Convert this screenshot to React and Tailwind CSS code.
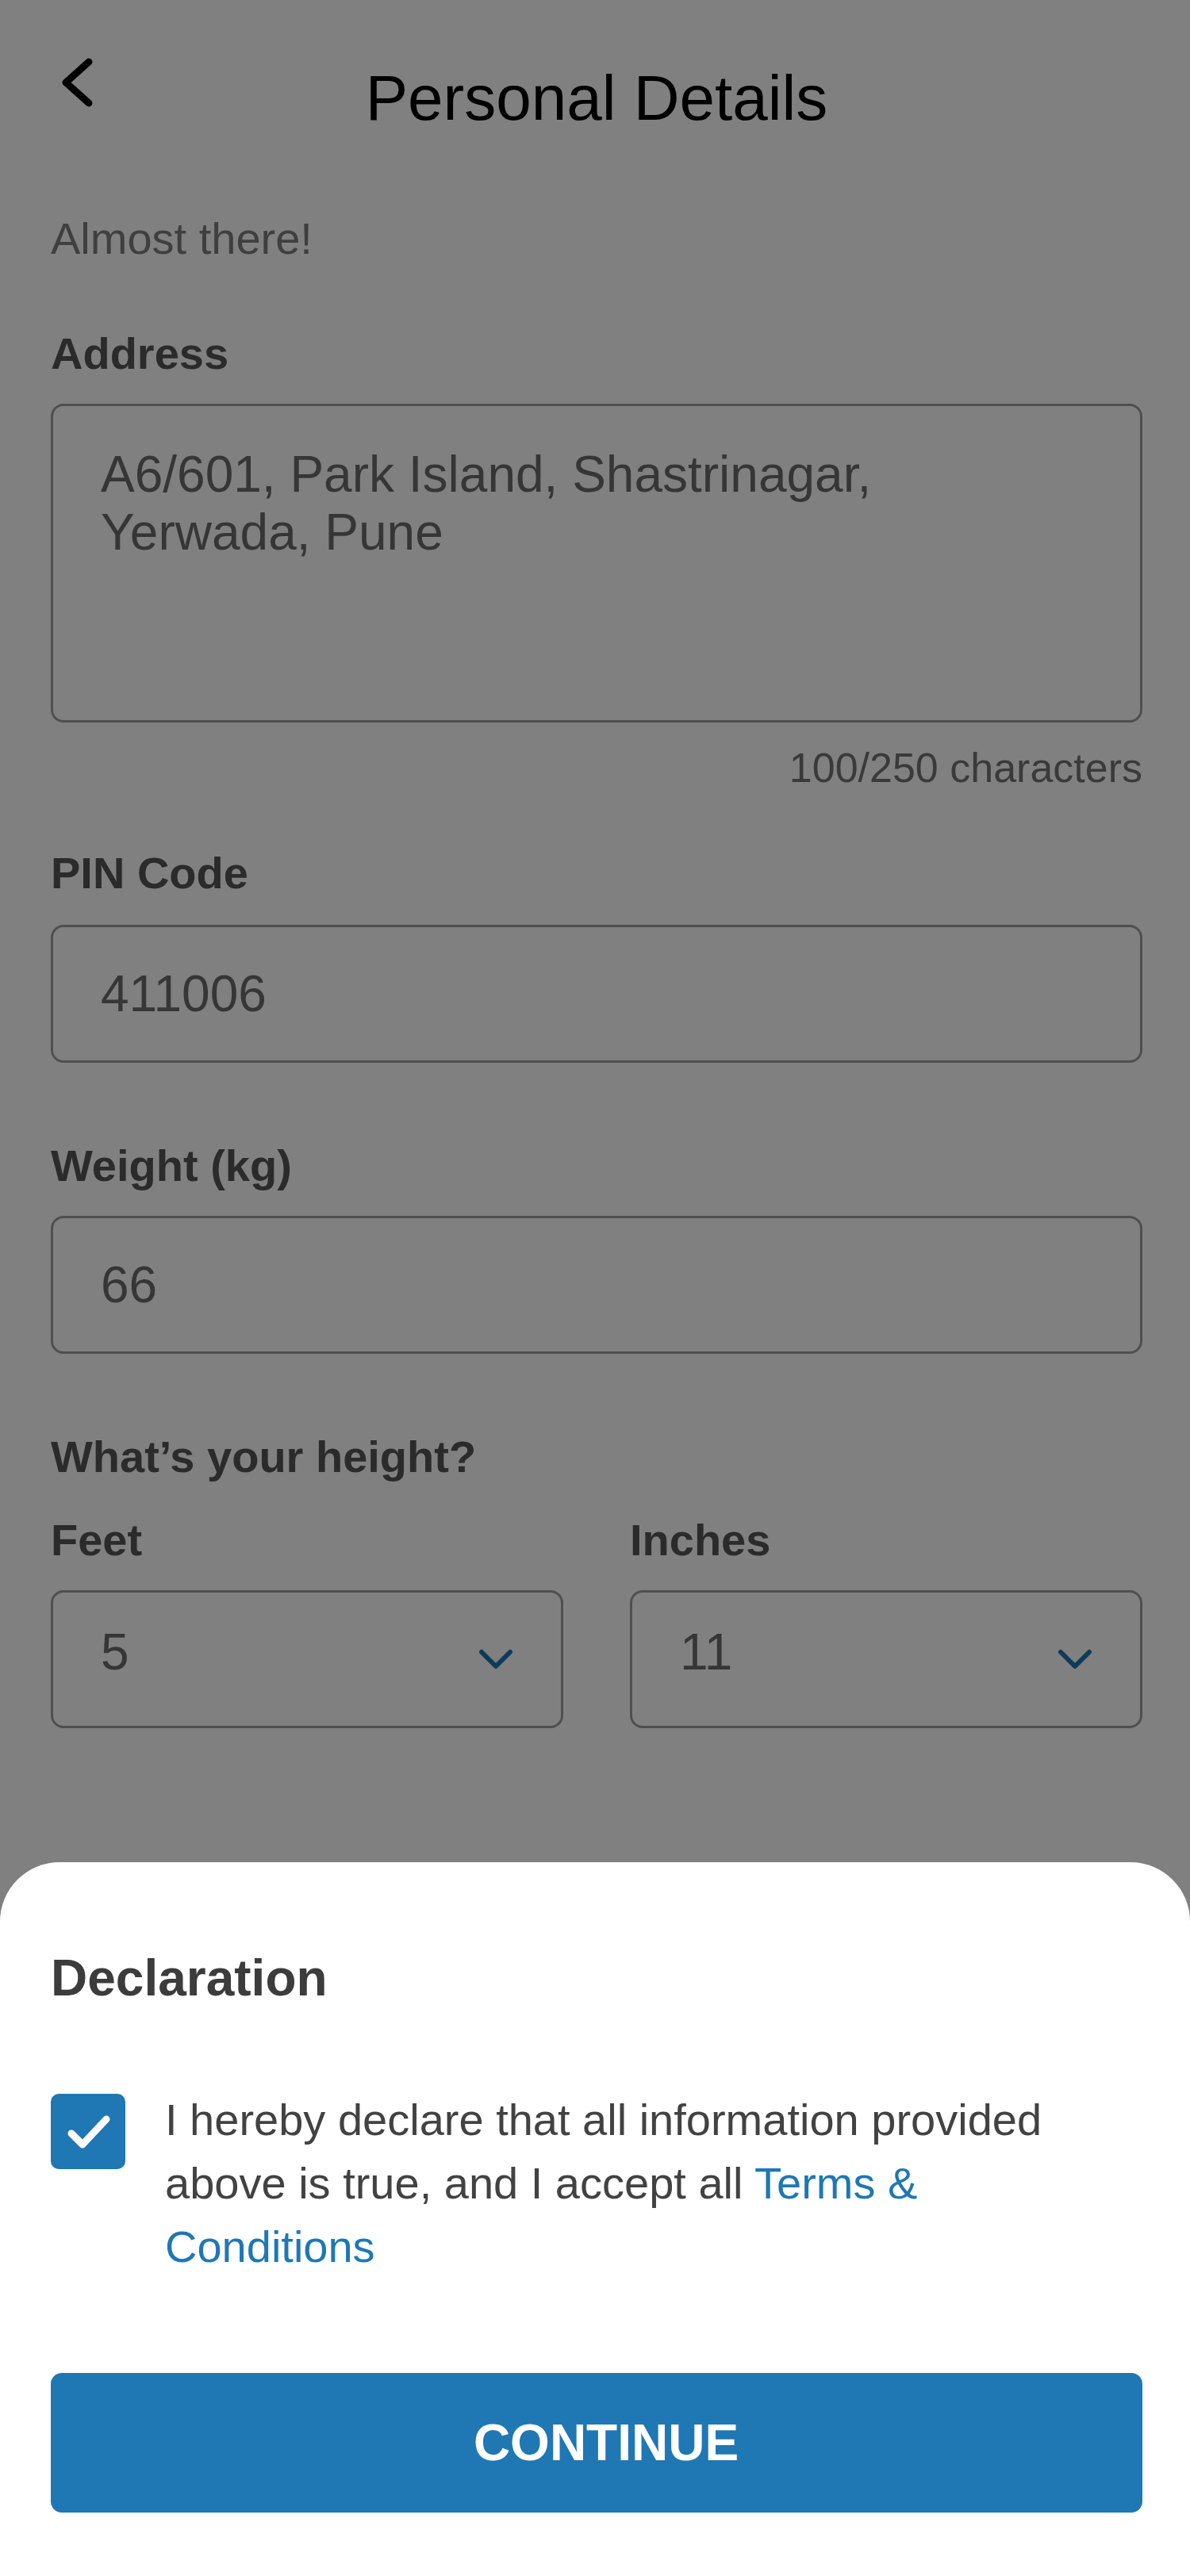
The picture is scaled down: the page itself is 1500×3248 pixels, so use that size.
import React from "react";

const font = { fontFamily: '"Liberation Sans", Arial, sans-serif' };

function Chevron() {
  return (
    <svg width="44" height="28" viewBox="0 0 44 28" className="shrink-0">
      <polyline
        points="4,5 22,23 40,5"
        fill="none"
        stroke="#0e3b5a"
        strokeWidth="6"
        strokeLinecap="round"
        strokeLinejoin="round"
      />
    </svg>
  );
}

function Label({ children, className = "" }) {
  return (
    <div className={`text-[56px] leading-[64px] font-bold text-[#2b2b2b] ${className}`}>
      {children}
    </div>
  );
}

function InputBox({ value, className = "" }) {
  return (
    <div
      className={`h-[174px] border-[3px] border-[#4f4f4f] rounded-[16px] flex items-center px-[60px] ${className}`}
    >
      <span className="text-[64px] leading-[73px] text-[#363636]">{value}</span>
    </div>
  );
}

function SelectBox({ value }) {
  return (
    <div className="h-[174px] border-[3px] border-[#4f4f4f] rounded-[16px] flex items-center justify-between pl-[60px] pr-[60px]">
      <span className="text-[64px] leading-[73px] text-[#363636] mb-[18px]">{value}</span>
      <Chevron />
    </div>
  );
}

export default function App() {
  return (
    <div style={font} className="w-[1500px] h-[3248px] bg-[#808080] flex flex-col">
      <div className="flex-1 pl-[64px] pr-[60px]">
        <div className="grid grid-cols-[1fr_auto_1fr] pt-[76px]">
          <div className="flex items-start">
            <svg width="64" height="80" viewBox="0 0 64 80" className="-mt-[6px]">
              <polyline
                points="48,8 19,34 48,60"
                fill="none"
                stroke="#000"
                strokeWidth="9"
                strokeLinecap="round"
                strokeLinejoin="round"
              />
            </svg>
          </div>
          <div className="text-[80px] leading-[96px] text-black text-center">Personal Details</div>
          <div />
        </div>

        <div className="mt-[97px] text-[56px] leading-[64px] text-[#3f3f3f]">Almost there!</div>

        <Label className="mt-[81px]">Address</Label>
        <div className="mt-[31px] h-[402px] border-[3px] border-[#4f4f4f] rounded-[16px] px-[60px] pt-[50px]">
          <div className="text-[64px] leading-[73px] text-[#363636]">
            A6/601, Park Island, Shastrinagar,
            <br />
            Yerwada, Pune
          </div>
        </div>
        <div className="mt-[27px] text-right text-[52px] leading-[60px] text-[#3a3a3a]">
          100/250 characters
        </div>

        <Label className="mt-[71px]">PIN Code</Label>
        <InputBox value="411006" className="mt-[33px]" />

        <Label className="mt-[98px]">Weight (kg)</Label>
        <InputBox value="66" className="mt-[31px]" />

        <Label className="mt-[98px]">What’s your height?</Label>
        <div className="mt-[41px] grid grid-cols-2 gap-x-[84px]">
          <Label>Feet</Label>
          <Label>Inches</Label>
          <div className="mt-[31px]">
            <SelectBox value="5" />
          </div>
          <div className="mt-[31px]">
            <SelectBox value="11" />
          </div>
        </div>
      </div>

      <div className="bg-white rounded-t-[75px] pl-[64px] pr-[60px] pt-[108px] pb-[80px]">
        <div className="text-[64px] leading-[76px] font-bold text-[#3c3c3c]">Declaration</div>
        <div className="mt-[101px] flex items-start gap-[50px]">
          <div className="mt-[7px] w-[94px] h-[95px] shrink-0 rounded-[10px] bg-[#1f77b4] flex items-center justify-center">
            <svg width="94" height="95" viewBox="0 0 94 95">
              <polyline
                points="26,50 40,64 70,32"
                fill="none"
                stroke="#fff"
                strokeWidth="9"
                strokeLinecap="round"
                strokeLinejoin="round"
              />
            </svg>
          </div>
          <p className="pr-[44px] text-[56px] leading-[80px] text-[#424242]">
            I hereby declare that all information provided above is true, and I accept all{" "}
            <span className="text-[#1f77b4]">Terms &amp; Conditions</span>
          </p>
        </div>
        <button className="mt-[119px] w-full h-[176px] rounded-[14px] bg-[#1f77b4] text-white text-[64px] font-bold flex items-center justify-center pl-[24px]">
          CONTINUE
        </button>
      </div>
    </div>
  );
}
